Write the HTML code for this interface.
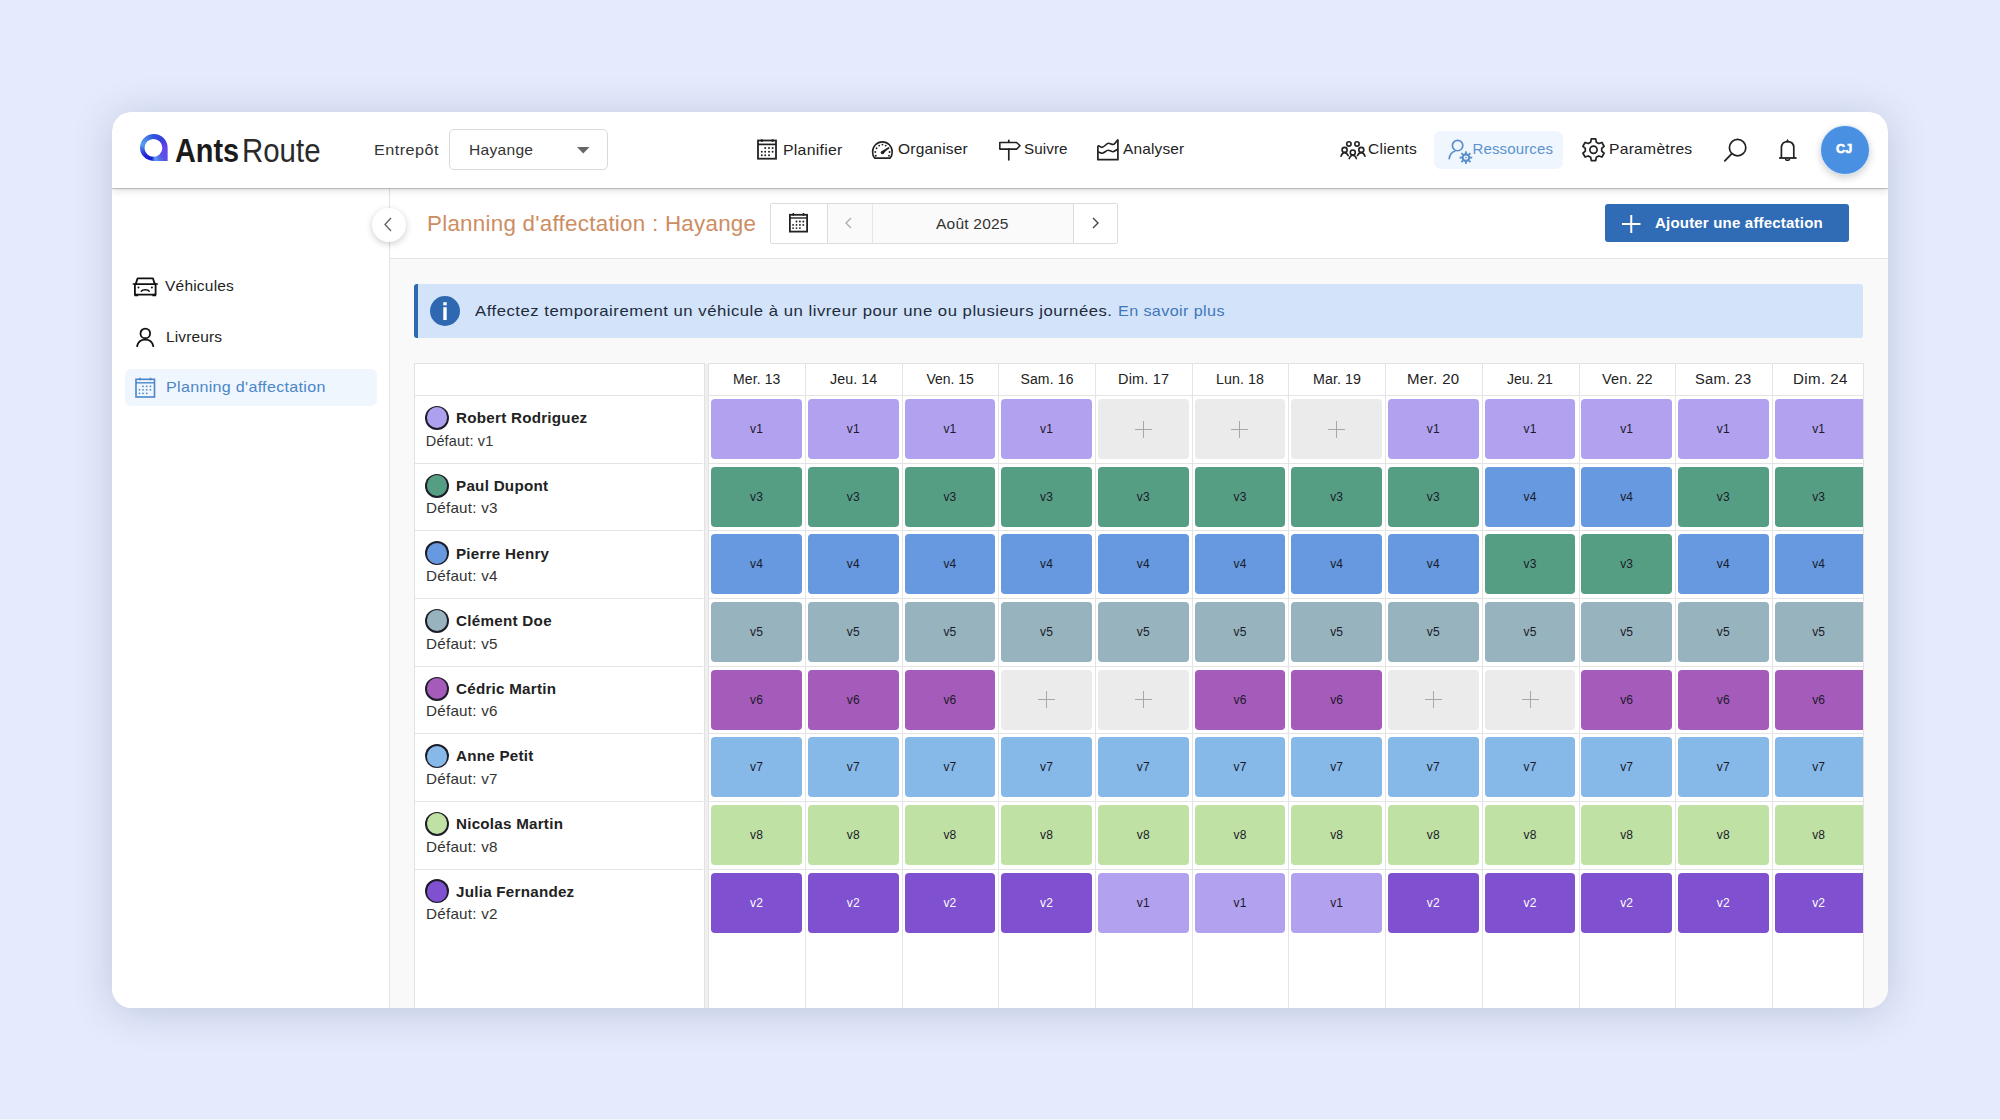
<!DOCTYPE html>
<html lang="fr">
<head>
<meta charset="utf-8">
<title>AntsRoute - Planning d'affectation</title>
<style>
html,body{margin:0;padding:0;}
body{width:2000px;height:1120px;overflow:hidden;background:#e5ebfc;font-family:"Liberation Sans", sans-serif;position:relative;}
.abs{position:absolute;}
.card{position:absolute;left:112px;top:112px;width:1776px;height:896px;border-radius:20px;background:#fff;overflow:hidden;box-shadow:0 4px 40px rgba(40,55,100,0.2);}
.layer{position:absolute;left:-112px;top:-112px;width:2000px;height:1120px;}
.tx{position:absolute;white-space:pre;font-family:"Liberation Sans", sans-serif;}
.header{position:absolute;left:112px;top:112px;width:1776px;height:76px;background:#fff;box-shadow:0 1px 1px rgba(0,0,0,0.19), 0 3px 7px rgba(0,0,0,0.12);z-index:3;}
.sidebar{position:absolute;left:112px;top:188px;width:277px;height:820px;background:#fff;border-right:1px solid #e3e3e3;}
.content{position:absolute;left:390px;top:188px;width:1498px;height:820px;background:#f9f9f9;}
.titlebar{position:absolute;left:390px;top:188px;width:1498px;height:70px;background:#fff;border-bottom:1px solid #e2e2e2;}
.sel{position:absolute;z-index:4;left:448.8px;top:128.8px;width:157px;height:39px;border:1px solid #d9d9d9;border-radius:5px;background:#fff;}
.navsel{position:absolute;z-index:4;left:1433.5px;top:130.5px;width:129px;height:38.5px;border-radius:7px;background:#f0f6fd;}
.avatar{position:absolute;z-index:4;left:1821px;top:125.5px;width:48px;height:48px;border-radius:50%;background:#4a90e2;box-shadow:0 0 0 1px rgba(215,232,252,0.9), 0 3px 8px rgba(0,0,0,0.22);}
.sideSel{position:absolute;left:125px;top:368.5px;width:251.5px;height:37.5px;border-radius:6px;background:#f0f6fd;}
.collapse{position:absolute;left:371.5px;top:207.5px;width:34px;height:34px;border-radius:50%;background:#fff;box-shadow:0 2px 7px rgba(0,0,0,0.2);z-index:4;}
.datepick{position:absolute;left:769.5px;top:202.8px;width:346.5px;height:39px;border:1px solid #dcdcdc;border-radius:2px;background:#fafafa;overflow:hidden;}
.btn{position:absolute;left:1605px;top:204px;width:244px;height:38px;border-radius:3px;background:#2f6cb5;}
.banner{position:absolute;left:414px;top:284px;width:1449px;height:54px;background:#d3e4fa;border-radius:3px;}
.banner:before{content:"";position:absolute;left:0;top:0;width:4px;height:54px;background:#2e68b0;border-radius:3px 0 0 3px;}
.tblL{position:absolute;left:414px;top:363px;width:288.5px;height:700px;border:1px solid #e2e2e2;background:#fff;}
.tblR{position:absolute;left:708px;top:363px;width:1153.5px;height:700px;border:1px solid #e2e2e2;border-right:1px solid #e2e2e2;background:#fff;}
.hl{position:absolute;height:1px;background:#e4e4e4;}
.vl{position:absolute;width:1px;background:#e4e4e4;}
.cell{position:absolute;height:60px;border-radius:4px;font-size:12px;line-height:60px;text-align:center;letter-spacing:0.2px;}
.cell.empty{background:#ebebeb;}
.plus{position:absolute;left:50%;top:50%;width:17px;height:17px;margin:-8.5px 0 0 -8.5px;}
.plus:before{content:"";position:absolute;left:0;top:8px;width:17px;height:1px;background:#a8a8a8;}
.plus:after{content:"";position:absolute;top:0;left:8px;height:17px;width:1px;background:#a8a8a8;}
.dot{position:absolute;left:425px;width:24px;height:24px;border-radius:50%;background:#1c1c28;}
.dot i{position:absolute;left:1.6px;top:1.6px;width:20.8px;height:20.8px;border-radius:50%;}
svg{position:absolute;overflow:visible;}
</style>
</head>
<body>
<div class="card"></div>
<div class="abs" style="left:112px;top:112px;width:1776px;height:896px;border-radius:20px;overflow:hidden;">
 <div class="layer">
  <div class="sidebar"></div>
  <div class="content"></div>
  <div class="titlebar"></div>
  <div class="banner"></div>
  <div class="tblL"></div>
  <div class="tblR"></div>
  <div class="abs" style="left:704.5px;top:364px;width:3.5px;height:700px;background:#efefef;"></div>
<div class="hl" style="left:415px;width:288px;top:395.00px"></div>
<div class="hl" style="left:709px;width:1153.5px;top:395.00px"></div>
<div class="hl" style="left:415px;width:288px;top:462.65px"></div>
<div class="hl" style="left:709px;width:1153.5px;top:462.65px"></div>
<div class="hl" style="left:415px;width:288px;top:530.30px"></div>
<div class="hl" style="left:709px;width:1153.5px;top:530.30px"></div>
<div class="hl" style="left:415px;width:288px;top:597.95px"></div>
<div class="hl" style="left:709px;width:1153.5px;top:597.95px"></div>
<div class="hl" style="left:415px;width:288px;top:665.60px"></div>
<div class="hl" style="left:709px;width:1153.5px;top:665.60px"></div>
<div class="hl" style="left:415px;width:288px;top:733.25px"></div>
<div class="hl" style="left:709px;width:1153.5px;top:733.25px"></div>
<div class="hl" style="left:415px;width:288px;top:800.90px"></div>
<div class="hl" style="left:709px;width:1153.5px;top:800.90px"></div>
<div class="hl" style="left:415px;width:288px;top:868.55px"></div>
<div class="hl" style="left:709px;width:1153.5px;top:868.55px"></div>
<div class="vl" style="left:805.08px;top:363px;height:700px"></div>
<div class="vl" style="left:901.76px;top:363px;height:700px"></div>
<div class="vl" style="left:998.44px;top:363px;height:700px"></div>
<div class="vl" style="left:1095.12px;top:363px;height:700px"></div>
<div class="vl" style="left:1191.80px;top:363px;height:700px"></div>
<div class="vl" style="left:1288.48px;top:363px;height:700px"></div>
<div class="vl" style="left:1385.16px;top:363px;height:700px"></div>
<div class="vl" style="left:1481.84px;top:363px;height:700px"></div>
<div class="vl" style="left:1578.52px;top:363px;height:700px"></div>
<div class="vl" style="left:1675.20px;top:363px;height:700px"></div>
<div class="vl" style="left:1771.88px;top:363px;height:700px"></div>
<div class="cell" style="left:711.30px;top:399.00px;width:90.58px;background:#b2a1ef;color:#1a1a2a;">v1</div>
<div class="cell" style="left:807.98px;top:399.00px;width:90.58px;background:#b2a1ef;color:#1a1a2a;">v1</div>
<div class="cell" style="left:904.66px;top:399.00px;width:90.58px;background:#b2a1ef;color:#1a1a2a;">v1</div>
<div class="cell" style="left:1001.34px;top:399.00px;width:90.58px;background:#b2a1ef;color:#1a1a2a;">v1</div>
<div class="cell empty" style="left:1098.02px;top:399.00px;width:90.58px;"><i class="plus"></i></div>
<div class="cell empty" style="left:1194.70px;top:399.00px;width:90.58px;"><i class="plus"></i></div>
<div class="cell empty" style="left:1291.38px;top:399.00px;width:90.58px;"><i class="plus"></i></div>
<div class="cell" style="left:1388.06px;top:399.00px;width:90.58px;background:#b2a1ef;color:#1a1a2a;">v1</div>
<div class="cell" style="left:1484.74px;top:399.00px;width:90.58px;background:#b2a1ef;color:#1a1a2a;">v1</div>
<div class="cell" style="left:1581.42px;top:399.00px;width:90.58px;background:#b2a1ef;color:#1a1a2a;">v1</div>
<div class="cell" style="left:1678.10px;top:399.00px;width:90.58px;background:#b2a1ef;color:#1a1a2a;">v1</div>
<div class="cell" style="left:1774.78px;top:399.00px;width:87.82px;background:#b2a1ef;color:#1a1a2a;border-radius:4px 0 0 4px;">v1</div>
<div class="cell" style="left:711.30px;top:466.65px;width:90.58px;background:#559e83;color:#1a1a2a;">v3</div>
<div class="cell" style="left:807.98px;top:466.65px;width:90.58px;background:#559e83;color:#1a1a2a;">v3</div>
<div class="cell" style="left:904.66px;top:466.65px;width:90.58px;background:#559e83;color:#1a1a2a;">v3</div>
<div class="cell" style="left:1001.34px;top:466.65px;width:90.58px;background:#559e83;color:#1a1a2a;">v3</div>
<div class="cell" style="left:1098.02px;top:466.65px;width:90.58px;background:#559e83;color:#1a1a2a;">v3</div>
<div class="cell" style="left:1194.70px;top:466.65px;width:90.58px;background:#559e83;color:#1a1a2a;">v3</div>
<div class="cell" style="left:1291.38px;top:466.65px;width:90.58px;background:#559e83;color:#1a1a2a;">v3</div>
<div class="cell" style="left:1388.06px;top:466.65px;width:90.58px;background:#559e83;color:#1a1a2a;">v3</div>
<div class="cell" style="left:1484.74px;top:466.65px;width:90.58px;background:#6699df;color:#1a1a2a;">v4</div>
<div class="cell" style="left:1581.42px;top:466.65px;width:90.58px;background:#6699df;color:#1a1a2a;">v4</div>
<div class="cell" style="left:1678.10px;top:466.65px;width:90.58px;background:#559e83;color:#1a1a2a;">v3</div>
<div class="cell" style="left:1774.78px;top:466.65px;width:87.82px;background:#559e83;color:#1a1a2a;border-radius:4px 0 0 4px;">v3</div>
<div class="cell" style="left:711.30px;top:534.30px;width:90.58px;background:#6699df;color:#1a1a2a;">v4</div>
<div class="cell" style="left:807.98px;top:534.30px;width:90.58px;background:#6699df;color:#1a1a2a;">v4</div>
<div class="cell" style="left:904.66px;top:534.30px;width:90.58px;background:#6699df;color:#1a1a2a;">v4</div>
<div class="cell" style="left:1001.34px;top:534.30px;width:90.58px;background:#6699df;color:#1a1a2a;">v4</div>
<div class="cell" style="left:1098.02px;top:534.30px;width:90.58px;background:#6699df;color:#1a1a2a;">v4</div>
<div class="cell" style="left:1194.70px;top:534.30px;width:90.58px;background:#6699df;color:#1a1a2a;">v4</div>
<div class="cell" style="left:1291.38px;top:534.30px;width:90.58px;background:#6699df;color:#1a1a2a;">v4</div>
<div class="cell" style="left:1388.06px;top:534.30px;width:90.58px;background:#6699df;color:#1a1a2a;">v4</div>
<div class="cell" style="left:1484.74px;top:534.30px;width:90.58px;background:#559e83;color:#1a1a2a;">v3</div>
<div class="cell" style="left:1581.42px;top:534.30px;width:90.58px;background:#559e83;color:#1a1a2a;">v3</div>
<div class="cell" style="left:1678.10px;top:534.30px;width:90.58px;background:#6699df;color:#1a1a2a;">v4</div>
<div class="cell" style="left:1774.78px;top:534.30px;width:87.82px;background:#6699df;color:#1a1a2a;border-radius:4px 0 0 4px;">v4</div>
<div class="cell" style="left:711.30px;top:601.95px;width:90.58px;background:#97b3bd;color:#1a1a2a;">v5</div>
<div class="cell" style="left:807.98px;top:601.95px;width:90.58px;background:#97b3bd;color:#1a1a2a;">v5</div>
<div class="cell" style="left:904.66px;top:601.95px;width:90.58px;background:#97b3bd;color:#1a1a2a;">v5</div>
<div class="cell" style="left:1001.34px;top:601.95px;width:90.58px;background:#97b3bd;color:#1a1a2a;">v5</div>
<div class="cell" style="left:1098.02px;top:601.95px;width:90.58px;background:#97b3bd;color:#1a1a2a;">v5</div>
<div class="cell" style="left:1194.70px;top:601.95px;width:90.58px;background:#97b3bd;color:#1a1a2a;">v5</div>
<div class="cell" style="left:1291.38px;top:601.95px;width:90.58px;background:#97b3bd;color:#1a1a2a;">v5</div>
<div class="cell" style="left:1388.06px;top:601.95px;width:90.58px;background:#97b3bd;color:#1a1a2a;">v5</div>
<div class="cell" style="left:1484.74px;top:601.95px;width:90.58px;background:#97b3bd;color:#1a1a2a;">v5</div>
<div class="cell" style="left:1581.42px;top:601.95px;width:90.58px;background:#97b3bd;color:#1a1a2a;">v5</div>
<div class="cell" style="left:1678.10px;top:601.95px;width:90.58px;background:#97b3bd;color:#1a1a2a;">v5</div>
<div class="cell" style="left:1774.78px;top:601.95px;width:87.82px;background:#97b3bd;color:#1a1a2a;border-radius:4px 0 0 4px;">v5</div>
<div class="cell" style="left:711.30px;top:669.60px;width:90.58px;background:#a55bb9;color:#1a1a2a;">v6</div>
<div class="cell" style="left:807.98px;top:669.60px;width:90.58px;background:#a55bb9;color:#1a1a2a;">v6</div>
<div class="cell" style="left:904.66px;top:669.60px;width:90.58px;background:#a55bb9;color:#1a1a2a;">v6</div>
<div class="cell empty" style="left:1001.34px;top:669.60px;width:90.58px;"><i class="plus"></i></div>
<div class="cell empty" style="left:1098.02px;top:669.60px;width:90.58px;"><i class="plus"></i></div>
<div class="cell" style="left:1194.70px;top:669.60px;width:90.58px;background:#a55bb9;color:#1a1a2a;">v6</div>
<div class="cell" style="left:1291.38px;top:669.60px;width:90.58px;background:#a55bb9;color:#1a1a2a;">v6</div>
<div class="cell empty" style="left:1388.06px;top:669.60px;width:90.58px;"><i class="plus"></i></div>
<div class="cell empty" style="left:1484.74px;top:669.60px;width:90.58px;"><i class="plus"></i></div>
<div class="cell" style="left:1581.42px;top:669.60px;width:90.58px;background:#a55bb9;color:#1a1a2a;">v6</div>
<div class="cell" style="left:1678.10px;top:669.60px;width:90.58px;background:#a55bb9;color:#1a1a2a;">v6</div>
<div class="cell" style="left:1774.78px;top:669.60px;width:87.82px;background:#a55bb9;color:#1a1a2a;border-radius:4px 0 0 4px;">v6</div>
<div class="cell" style="left:711.30px;top:737.25px;width:90.58px;background:#86b8e8;color:#1a1a2a;">v7</div>
<div class="cell" style="left:807.98px;top:737.25px;width:90.58px;background:#86b8e8;color:#1a1a2a;">v7</div>
<div class="cell" style="left:904.66px;top:737.25px;width:90.58px;background:#86b8e8;color:#1a1a2a;">v7</div>
<div class="cell" style="left:1001.34px;top:737.25px;width:90.58px;background:#86b8e8;color:#1a1a2a;">v7</div>
<div class="cell" style="left:1098.02px;top:737.25px;width:90.58px;background:#86b8e8;color:#1a1a2a;">v7</div>
<div class="cell" style="left:1194.70px;top:737.25px;width:90.58px;background:#86b8e8;color:#1a1a2a;">v7</div>
<div class="cell" style="left:1291.38px;top:737.25px;width:90.58px;background:#86b8e8;color:#1a1a2a;">v7</div>
<div class="cell" style="left:1388.06px;top:737.25px;width:90.58px;background:#86b8e8;color:#1a1a2a;">v7</div>
<div class="cell" style="left:1484.74px;top:737.25px;width:90.58px;background:#86b8e8;color:#1a1a2a;">v7</div>
<div class="cell" style="left:1581.42px;top:737.25px;width:90.58px;background:#86b8e8;color:#1a1a2a;">v7</div>
<div class="cell" style="left:1678.10px;top:737.25px;width:90.58px;background:#86b8e8;color:#1a1a2a;">v7</div>
<div class="cell" style="left:1774.78px;top:737.25px;width:87.82px;background:#86b8e8;color:#1a1a2a;border-radius:4px 0 0 4px;">v7</div>
<div class="cell" style="left:711.30px;top:804.90px;width:90.58px;background:#bfe1a3;color:#1a1a2a;">v8</div>
<div class="cell" style="left:807.98px;top:804.90px;width:90.58px;background:#bfe1a3;color:#1a1a2a;">v8</div>
<div class="cell" style="left:904.66px;top:804.90px;width:90.58px;background:#bfe1a3;color:#1a1a2a;">v8</div>
<div class="cell" style="left:1001.34px;top:804.90px;width:90.58px;background:#bfe1a3;color:#1a1a2a;">v8</div>
<div class="cell" style="left:1098.02px;top:804.90px;width:90.58px;background:#bfe1a3;color:#1a1a2a;">v8</div>
<div class="cell" style="left:1194.70px;top:804.90px;width:90.58px;background:#bfe1a3;color:#1a1a2a;">v8</div>
<div class="cell" style="left:1291.38px;top:804.90px;width:90.58px;background:#bfe1a3;color:#1a1a2a;">v8</div>
<div class="cell" style="left:1388.06px;top:804.90px;width:90.58px;background:#bfe1a3;color:#1a1a2a;">v8</div>
<div class="cell" style="left:1484.74px;top:804.90px;width:90.58px;background:#bfe1a3;color:#1a1a2a;">v8</div>
<div class="cell" style="left:1581.42px;top:804.90px;width:90.58px;background:#bfe1a3;color:#1a1a2a;">v8</div>
<div class="cell" style="left:1678.10px;top:804.90px;width:90.58px;background:#bfe1a3;color:#1a1a2a;">v8</div>
<div class="cell" style="left:1774.78px;top:804.90px;width:87.82px;background:#bfe1a3;color:#1a1a2a;border-radius:4px 0 0 4px;">v8</div>
<div class="cell" style="left:711.30px;top:872.55px;width:90.58px;background:#7f50d0;color:#fff;">v2</div>
<div class="cell" style="left:807.98px;top:872.55px;width:90.58px;background:#7f50d0;color:#fff;">v2</div>
<div class="cell" style="left:904.66px;top:872.55px;width:90.58px;background:#7f50d0;color:#fff;">v2</div>
<div class="cell" style="left:1001.34px;top:872.55px;width:90.58px;background:#7f50d0;color:#fff;">v2</div>
<div class="cell" style="left:1098.02px;top:872.55px;width:90.58px;background:#b2a1ef;color:#1a1a2a;">v1</div>
<div class="cell" style="left:1194.70px;top:872.55px;width:90.58px;background:#b2a1ef;color:#1a1a2a;">v1</div>
<div class="cell" style="left:1291.38px;top:872.55px;width:90.58px;background:#b2a1ef;color:#1a1a2a;">v1</div>
<div class="cell" style="left:1388.06px;top:872.55px;width:90.58px;background:#7f50d0;color:#fff;">v2</div>
<div class="cell" style="left:1484.74px;top:872.55px;width:90.58px;background:#7f50d0;color:#fff;">v2</div>
<div class="cell" style="left:1581.42px;top:872.55px;width:90.58px;background:#7f50d0;color:#fff;">v2</div>
<div class="cell" style="left:1678.10px;top:872.55px;width:90.58px;background:#7f50d0;color:#fff;">v2</div>
<div class="cell" style="left:1774.78px;top:872.55px;width:87.82px;background:#7f50d0;color:#fff;border-radius:4px 0 0 4px;">v2</div>
<div class="dot" style="top:405.90px"><i style="background:#ada0ee"></i></div>
<div class="dot" style="top:473.55px"><i style="background:#559e83"></i></div>
<div class="dot" style="top:541.20px"><i style="background:#6699df"></i></div>
<div class="dot" style="top:608.85px"><i style="background:#97b3bd"></i></div>
<div class="dot" style="top:676.50px"><i style="background:#a55bb9"></i></div>
<div class="dot" style="top:744.15px"><i style="background:#86b8e8"></i></div>
<div class="dot" style="top:811.80px"><i style="background:#bfe1a3"></i></div>
<div class="dot" style="top:879.45px"><i style="background:#7f50d0"></i></div>
  <div class="sideSel"></div>
  <div class="datepick">
    <div class="abs" style="left:0;top:0;width:56px;height:39px;background:#fff;border-right:1px solid #dcdcdc;"></div>
    <div class="abs" style="left:101px;top:0;width:1px;height:39px;background:#e6e6e6;"></div>
    <div class="abs" style="left:302px;top:0;width:44.5px;height:39px;background:#fff;border-left:1px solid #dcdcdc;"></div>
  </div>
  <div class="btn"></div>
  <div class="header"></div>
  <div class="collapse"></div>
  <div class="sel"></div>
  <div class="navsel"></div>
  <div class="avatar"></div>
 </div>
</div>

<!-- icons -->
<div style="position:absolute;left:0;top:0;width:2000px;height:1120px;z-index:10;">
<!-- logo -->
<div style="position:absolute;left:139.75px;top:134.2px;width:28px;height:27px;background:conic-gradient(from 0deg at 13.7px 13.7px,#3050e0 0deg,#3a3fd8 45deg,#6644ea 90deg,#5a50e6 135deg,#4f7fee 160deg,#60a0f4 172deg,#1a1fd6 190deg,#1e22d0 225deg,#3a56e0 255deg,#55a0ee 285deg,#4a80e6 320deg,#3050e0 360deg);clip-path:path(evenodd,'M0.25 13.7 A13.45 13.45 0 0 1 27.9 13.7 V26.7 H13.7 A13.45 13.45 0 0 1 0.25 13.7 Z M4.8 13.7 A8.9 8.9 0 1 0 22.6 13.7 A8.9 8.9 0 1 0 4.8 13.7 Z');"></div>

<!-- select arrow -->
<svg style="left:577px;top:147px" width="12.5" height="6.5" viewBox="0 0 12.5 6.5"><path d="M0 0 H12.5 L6.25 6.5 Z" fill="#666"/></svg>

<!-- Planifier calendar -->
<svg style="left:757px;top:138.5px" width="20" height="21" viewBox="0 0 20 21">
  <rect x="1" y="1.5" width="18" height="18.2" fill="none" stroke="#222" stroke-width="1.8"/>
  <line x1="1" y1="5.4" x2="19" y2="5.4" stroke="#222" stroke-width="1.7"/>
  <circle cx="4.8" cy="1.6" r="1.4" fill="#222"/><circle cx="15.6" cy="1.6" r="1.4" fill="#222"/>
  <g fill="#222"><circle cx="8.2" cy="9" r="1"/><circle cx="12" cy="9" r="1"/><circle cx="15.6" cy="9" r="1"/>
  <circle cx="4.8" cy="12.8" r="1"/><circle cx="8.2" cy="12.8" r="1"/><circle cx="12" cy="12.8" r="1"/><circle cx="15.6" cy="12.8" r="1"/>
  <circle cx="4.8" cy="16.3" r="1"/><circle cx="8.2" cy="16.3" r="1"/><circle cx="12" cy="16.3" r="1"/></g>
</svg>

<!-- Organiser gauge -->
<svg style="left:872px;top:140.5px" width="21" height="18" viewBox="0 0 21 18">
  <path d="M2.6 17.1 C1.3 15.3 0.6 13.2 0.6 10.9 C0.6 5.2 5 0.9 10.4 0.9 C15.8 0.9 20.2 5.2 20.2 10.9 C20.2 13.2 19.5 15.3 18.2 17.1 Z" fill="none" stroke="#222" stroke-width="1.6" stroke-linejoin="round"/>
  <path d="M10.4 10.8 L16.6 7" stroke="#222" stroke-width="1.7" stroke-linecap="round"/>
  <path d="M8.8 11.6 L16.6 7 L11.2 12.9 Z" fill="#222"/>
  <circle cx="10.4" cy="11.6" r="1.7" fill="#222"/>
  <g fill="#222"><circle cx="3.3" cy="11" r="0.95"/><circle cx="4.6" cy="7.3" r="0.95"/><circle cx="7.2" cy="4.6" r="0.95"/><circle cx="10.4" cy="3.6" r="0.95"/><circle cx="13.7" cy="4.6" r="0.95"/><circle cx="17.6" cy="11" r="0.95"/><circle cx="3.8" cy="14.7" r="0.95"/><circle cx="17" cy="14.7" r="0.95"/></g>
</svg>

<!-- Suivre signpost -->
<svg style="left:999px;top:139.5px" width="22" height="21" viewBox="0 0 22 21">
  <path d="M0.8 2.5 H17.6 L21 5.8 L17.6 9.1 H0.8 Z" fill="none" stroke="#222" stroke-width="1.6" stroke-linejoin="round"/>
  <line x1="9.8" y1="-0.3" x2="9.8" y2="2.5" stroke="#222" stroke-width="1.7"/>
  <line x1="9.8" y1="9.1" x2="9.8" y2="19.8" stroke="#222" stroke-width="1.7" stroke-linecap="round"/>
</svg>

<!-- Analyser chart -->
<svg style="left:1097px;top:139.5px" width="22" height="21" viewBox="0 0 22 21">
  <path d="M0.9 5.8 V19.7 H20.9 V-0.4" fill="none" stroke="#222" stroke-width="1.7" stroke-linejoin="round"/>
  <path d="M0.9 5.8 C2.5 5.2 3.5 7.4 4.9 7.4 C7 7.4 9.5 3.3 11.4 3.3 C13.3 3.3 14.8 4.6 16.2 4.5 C17.8 4.4 19.5 1.2 20.9 -0.4" fill="none" stroke="#222" stroke-width="1.6"/>
  <path d="M0.9 12.2 C2.5 11.8 3.6 13.3 5 13.3 C7 13.3 9.2 10.3 11 10.3 C13 10.3 14.6 11.8 16 11.7 C17.8 11.5 19.4 9.8 20.9 9" fill="none" stroke="#222" stroke-width="1.6"/>
</svg>

<!-- Clients -->
<svg style="left:1340px;top:140.5px" width="26" height="18.5" viewBox="0 0 26 18.5">
  <g fill="none" stroke="#222" stroke-width="1.6" stroke-linecap="round">
   <circle cx="8.9" cy="2.9" r="2.2"/><circle cx="17" cy="2.9" r="2.2"/>
   <circle cx="4.6" cy="8.9" r="2.5"/><circle cx="12.8" cy="11.5" r="2.5"/><circle cx="21.3" cy="8.9" r="2.5"/>
   <path d="M1 15.2 C1.8 13 3 11.6 4.6 11.6 C6.2 11.6 7.4 13 8.2 14.6"/>
   <path d="M9.2 17.6 C10 15.4 11.2 14.2 12.8 14.2 C14.4 14.2 15.6 15.4 16.4 17.6"/>
   <path d="M17.4 14.6 C18.2 13 19.6 11.6 21.3 11.6 C23 11.6 24.2 13 25 15.2"/>
  </g>
</svg>

<!-- Ressources -->
<svg style="left:1447.5px;top:140px" width="25" height="24" viewBox="0 0 25 24">
  <g fill="none" stroke="#5b8fcc" stroke-width="1.7" stroke-linecap="round">
   <circle cx="9.6" cy="5.55" r="5.2"/>
   <path d="M6.8 11.2 C3.6 12 1.8 14.8 1.2 18.6"/>
  </g>
  <g transform="translate(17.9,17.6)">
   <circle r="4.3" fill="#5b8fcc"/>
   <g stroke="#5b8fcc" stroke-width="1.9"><line x1="0" y1="-6.3" x2="0" y2="6.3"/><line x1="-6.3" y1="0" x2="6.3" y2="0"/><line x1="-4.5" y1="-4.5" x2="4.5" y2="4.5"/><line x1="-4.5" y1="4.5" x2="4.5" y2="-4.5"/></g>
   <circle r="2.2" fill="#f0f6fd"/>
   <circle r="0.8" fill="#5b8fcc"/>
  </g>
</svg>

<!-- Parametres gear -->
<svg style="left:1582px;top:137.5px" width="23" height="23.5" viewBox="-11.5 -11.75 23 23.5">
  <path d="M-2.2 -10.8 L2.2 -10.8 L2.8 -7.6 L5.3 -6.2 L8.4 -7.3 L10.6 -3.5 L8.2 -1.4 L8.2 1.4 L10.6 3.5 L8.4 7.3 L5.3 6.2 L2.8 7.6 L2.2 10.8 L-2.2 10.8 L-2.8 7.6 L-5.3 6.2 L-8.4 7.3 L-10.6 3.5 L-8.2 1.4 L-8.2 -1.4 L-10.6 -3.5 L-8.4 -7.3 L-5.3 -6.2 L-2.8 -7.6 Z" fill="none" stroke="#222" stroke-width="1.7" stroke-linejoin="round"/>
  <circle r="3.6" fill="none" stroke="#222" stroke-width="1.7"/>
</svg>

<!-- search -->
<svg style="left:1723.5px;top:139px" width="23" height="23" viewBox="0 0 23 23">
  <circle cx="13.6" cy="8.65" r="8.2" fill="none" stroke="#222" stroke-width="1.7"/>
  <line x1="7.6" y1="14.9" x2="0.8" y2="21.9" stroke="#222" stroke-width="1.8" stroke-linecap="round"/>
</svg>

<!-- bell -->
<svg style="left:1779px;top:139px" width="18.5" height="23" viewBox="0 0 18.5 23">
  <path d="M2.4 19 V8.6 C2.4 4.6 5 2.6 8.5 2.6 C12 2.6 14.8 4.6 14.8 8.6 V19" fill="none" stroke="#222" stroke-width="1.7"/>
  <path d="M0.1 19 H17.6" stroke="#222" stroke-width="1.8"/>
  <path d="M6.6 19.4 A1.95 1.95 0 0 0 10.5 19.4" fill="none" stroke="#222" stroke-width="1.5"/>
  <path d="M7.4 2.8 L8.5 0.6 L9.6 2.8 Z" fill="#222" stroke="#222" stroke-width="1" stroke-linejoin="round"/>
</svg>

<!-- sidebar vehicle -->
<svg style="left:132.5px;top:276.5px" width="25" height="19" viewBox="0 0 25 19">
  <path d="M2.7 7.1 L4.6 1.3 H19.9 L21.8 7.1" fill="none" stroke="#111" stroke-width="1.8" stroke-linejoin="round"/>
  <path d="M1.9 7.1 H22.6 V17.6 H1.9 Z" fill="none" stroke="#111" stroke-width="1.8" stroke-linejoin="round"/>
  <path d="M0.3 7.1 H2.5 M22 7.1 H24.3" stroke="#111" stroke-width="1.5" stroke-linecap="round"/>
  <path d="M2.2 16.5 V18.4 H5.2 M22.3 16.5 V18.4 H19.3" fill="none" stroke="#111" stroke-width="1.6"/>
  <circle cx="5.5" cy="10.6" r="1" fill="#111"/><circle cx="18.9" cy="10.6" r="1" fill="#111"/>
  <path d="M8.4 14.2 C9 13 10.5 12.8 12.2 12.8 C13.9 12.8 15.5 13 16.1 14.2" fill="none" stroke="#111" stroke-width="1.6" stroke-linecap="round"/>
</svg>

<!-- sidebar livreurs -->
<svg style="left:135.5px;top:326.5px" width="19" height="20" viewBox="0 0 19 20">
  <circle cx="9.3" cy="6.4" r="4.8" fill="none" stroke="#111" stroke-width="1.8"/>
  <path d="M1.1 19.2 C2 14.8 5 12.6 9.3 12.6 C13.6 12.6 16.4 14.8 17.3 19.2" fill="none" stroke="#111" stroke-width="1.8" stroke-linecap="round"/>
</svg>

<!-- sidebar planning calendar -->
<svg style="left:134.5px;top:376.5px" width="20.5" height="21" viewBox="0 0 20.5 21">
  <rect x="1" y="2.3" width="18.5" height="17.7" fill="none" stroke="#4a86c8" stroke-width="1.6"/>
  <line x1="1" y1="5.8" x2="19.5" y2="5.8" stroke="#4a86c8" stroke-width="1.4"/>
  <line x1="5" y1="0.8" x2="5" y2="3.3" stroke="#4a86c8" stroke-width="1.6"/>
  <line x1="15.5" y1="0.8" x2="15.5" y2="3.3" stroke="#4a86c8" stroke-width="1.6"/>
  <g fill="#4a86c8"><circle cx="8" cy="9.3" r="0.9"/><circle cx="11.7" cy="9.3" r="0.9"/><circle cx="15.4" cy="9.3" r="0.9"/>
  <circle cx="4.5" cy="12.8" r="0.9"/><circle cx="8" cy="12.8" r="0.9"/><circle cx="11.7" cy="12.8" r="0.9"/><circle cx="15.4" cy="12.8" r="0.9"/>
  <circle cx="4.5" cy="16.3" r="0.9"/><circle cx="8" cy="16.3" r="0.9"/><circle cx="11.7" cy="16.3" r="0.9"/></g>
</svg>

<!-- collapse chevron -->
<svg style="left:383.5px;top:217px" width="8" height="15" viewBox="0 0 8 15"><path d="M7 1 L1 7.5 L7 14" fill="none" stroke="#666" stroke-width="1.4"/></svg>

<!-- datepicker calendar -->
<svg style="left:789px;top:212.5px" width="19" height="19.5" viewBox="0 0 19 19.5">
  <rect x="0.9" y="1.8" width="17.2" height="16.8" fill="none" stroke="#222" stroke-width="1.8"/>
  <line x1="0.9" y1="5" x2="18.1" y2="5" stroke="#222" stroke-width="1.4"/>
  <line x1="4.3" y1="0" x2="4.3" y2="2.8" stroke="#222" stroke-width="1.6"/>
  <line x1="14.5" y1="0" x2="14.5" y2="2.8" stroke="#222" stroke-width="1.6"/>
  <g fill="#222"><circle cx="7.5" cy="8.5" r="0.95"/><circle cx="10.9" cy="8.5" r="0.95"/><circle cx="14.3" cy="8.5" r="0.95"/>
  <circle cx="4.1" cy="11.9" r="0.95"/><circle cx="7.5" cy="11.9" r="0.95"/><circle cx="10.9" cy="11.9" r="0.95"/><circle cx="14.3" cy="11.9" r="0.95"/>
  <circle cx="4.1" cy="15.1" r="0.95"/><circle cx="7.5" cy="15.1" r="0.95"/><circle cx="10.9" cy="15.1" r="0.95"/></g>
</svg>
<!-- datepicker prev/next -->
<svg style="left:845px;top:217px" width="7" height="12" viewBox="0 0 7 12"><path d="M6 1 L1 6 L6 11" fill="none" stroke="#aaa" stroke-width="1.3"/></svg>
<svg style="left:1092px;top:217px" width="7" height="12" viewBox="0 0 7 12"><path d="M1 1 L6 6 L1 11" fill="none" stroke="#444" stroke-width="1.4"/></svg>

<!-- button plus -->
<svg style="left:1621.5px;top:215px" width="18.5" height="18" viewBox="0 0 18.5 18"><path d="M9.25 0 V18 M0 9 H18.5" stroke="#fff" stroke-width="2"/></svg>

<!-- info icon -->
<svg style="left:430px;top:296px" width="30" height="30" viewBox="0 0 30 30">
  <circle cx="15" cy="15" r="15" fill="#2e68b0"/>
  <rect x="13.3" y="6.2" width="3.4" height="3.2" fill="#fff"/>
  <rect x="13.3" y="11.2" width="3.4" height="12.8" fill="#fff"/>
</svg>
<div class="tx" style="top:133.87px;font-size:33px;line-height:33px;font-weight:700;color:#1b1b1b;letter-spacing:0.000px;transform:scaleX(0.8753);transform-origin:0 0;left:175.20px;">Ants</div>
<div class="tx" style="top:133.87px;font-size:33px;line-height:33px;font-weight:400;color:#2a2a2a;letter-spacing:0.000px;transform:scaleX(0.8914);transform-origin:0 0;left:241.60px;">Route</div>
<div class="tx" style="top:141.80px;font-size:15px;line-height:15px;font-weight:400;color:#333;letter-spacing:0.406px;transform:scaleX(1.0813);transform-origin:0 0;left:374.30px;">Entrepôt</div>
<div class="tx" style="top:141.80px;font-size:15px;line-height:15px;font-weight:400;color:#333;letter-spacing:0.254px;transform:scaleX(1.0395);transform-origin:0 0;left:469.00px;">Hayange</div>
<div class="tx" style="top:141.55px;font-size:15px;line-height:15px;font-weight:400;color:#222;letter-spacing:0.239px;transform:scaleX(1.0559);transform-origin:0 0;left:782.75px;">Planifier</div>
<div class="tx" style="top:141.30px;font-size:15px;line-height:15px;font-weight:400;color:#222;letter-spacing:0.190px;transform:scaleX(1.0359);transform-origin:0 0;left:898.20px;">Organiser</div>
<div class="tx" style="top:141.30px;font-size:15px;line-height:15px;font-weight:400;color:#222;letter-spacing:0.084px;transform:scaleX(1.0151);transform-origin:0 0;left:1024.00px;">Suivre</div>
<div class="tx" style="top:141.30px;font-size:15px;line-height:15px;font-weight:400;color:#222;letter-spacing:0.158px;transform:scaleX(1.0292);transform-origin:0 0;left:1122.80px;">Analyser</div>
<div class="tx" style="top:141.30px;font-size:15px;line-height:15px;font-weight:400;color:#222;letter-spacing:0.195px;transform:scaleX(1.0398);transform-origin:0 0;left:1368.00px;">Clients</div>
<div class="tx" style="top:141.30px;font-size:15px;line-height:15px;font-weight:400;color:#5b92d0;letter-spacing:0.144px;left:1472.50px;">Ressources</div>
<div class="tx" style="top:141.10px;font-size:15px;line-height:15px;font-weight:400;color:#222;letter-spacing:0.241px;transform:scaleX(1.0439);transform-origin:0 0;left:1608.80px;">Paramètres</div>
<div class="tx" style="top:143.22px;font-size:12.5px;line-height:12.5px;font-weight:700;color:#fff;letter-spacing:0.216px;-webkit-text-stroke:0.6px #fff;left:1836.00px;">CJ</div>
<div class="tx" style="top:278.00px;font-size:15px;line-height:15px;font-weight:400;color:#222;letter-spacing:0.186px;transform:scaleX(1.0355);transform-origin:0 0;left:165.40px;">Véhicules</div>
<div class="tx" style="top:329.00px;font-size:15px;line-height:15px;font-weight:400;color:#222;letter-spacing:0.152px;transform:scaleX(1.0308);transform-origin:0 0;left:166.00px;">Livreurs</div>
<div class="tx" style="top:379.30px;font-size:15px;line-height:15px;font-weight:400;color:#4a86c8;letter-spacing:0.296px;transform:scaleX(1.0698);transform-origin:0 0;left:166.00px;">Planning d&#39;affectation</div>
<div class="tx" style="top:213.80px;font-size:21.5px;line-height:21.5px;font-weight:400;color:#cd8d63;letter-spacing:0.254px;transform:scaleX(1.0398);transform-origin:0 0;left:427.40px;">Planning d&#39;affectation : Hayange</div>
<div class="tx" style="top:215.80px;font-size:15px;line-height:15px;font-weight:400;color:#333;letter-spacing:0.198px;transform:scaleX(1.0359);transform-origin:0 0;left:935.50px;">Août 2025</div>
<div class="tx" style="top:215.73px;font-size:14.5px;line-height:14.5px;font-weight:700;color:#fff;letter-spacing:0.172px;transform:scaleX(1.0372);transform-origin:0 0;left:1655.30px;">Ajouter une affectation</div>
<div class="tx" style="top:303.10px;font-size:15px;line-height:15px;font-weight:400;color:#1d2b3a;letter-spacing:0.460px;transform:scaleX(1.1132);transform-origin:0 0;left:475.00px;">Affectez temporairement un véhicule à un livreur pour une ou plusieurs journées.</div>
<div class="tx" style="top:303.10px;font-size:15px;line-height:15px;font-weight:400;color:#3f77b8;letter-spacing:0.350px;transform:scaleX(1.0782);transform-origin:0 0;left:1118.00px;">En savoir plus</div>
<div class="tx" style="top:372.45px;font-size:14px;line-height:14px;font-weight:400;color:#222;letter-spacing:0.116px;left:733.00px;">Mer. 13</div>
<div class="tx" style="top:372.45px;font-size:14px;line-height:14px;font-weight:400;color:#222;letter-spacing:0.076px;transform:scaleX(1.0152);transform-origin:0 0;left:829.90px;">Jeu. 14</div>
<div class="tx" style="top:372.45px;font-size:14px;line-height:14px;font-weight:400;color:#222;letter-spacing:-0.017px;left:926.50px;">Ven. 15</div>
<div class="tx" style="top:372.45px;font-size:14px;line-height:14px;font-weight:400;color:#222;letter-spacing:0.160px;left:1020.40px;">Sam. 16</div>
<div class="tx" style="top:372.45px;font-size:14px;line-height:14px;font-weight:400;color:#222;letter-spacing:0.184px;transform:scaleX(1.0356);transform-origin:0 0;left:1117.90px;">Dim. 17</div>
<div class="tx" style="top:372.45px;font-size:14px;line-height:14px;font-weight:400;color:#222;letter-spacing:0.084px;transform:scaleX(1.0165);transform-origin:0 0;left:1216.00px;">Lun. 18</div>
<div class="tx" style="top:372.45px;font-size:14px;line-height:14px;font-weight:400;color:#222;letter-spacing:0.085px;transform:scaleX(1.0167);transform-origin:0 0;left:1312.90px;">Mar. 19</div>
<div class="tx" style="top:372.45px;font-size:14px;line-height:14px;font-weight:400;color:#222;letter-spacing:0.342px;transform:scaleX(1.0706);transform-origin:0 0;left:1407.40px;">Mer. 20</div>
<div class="tx" style="top:372.45px;font-size:14px;line-height:14px;font-weight:400;color:#222;letter-spacing:-0.006px;left:1507.00px;">Jeu. 21</div>
<div class="tx" style="top:372.45px;font-size:14px;line-height:14px;font-weight:400;color:#222;letter-spacing:0.193px;transform:scaleX(1.0379);transform-origin:0 0;left:1601.50px;">Ven. 22</div>
<div class="tx" style="top:372.45px;font-size:14px;line-height:14px;font-weight:400;color:#222;letter-spacing:0.252px;transform:scaleX(1.0456);transform-origin:0 0;left:1695.40px;">Sam. 23</div>
<div class="tx" style="top:372.45px;font-size:14px;line-height:14px;font-weight:400;color:#222;letter-spacing:0.388px;transform:scaleX(1.0779);transform-origin:0 0;left:1793.00px;">Dim. 24</div>
<div class="tx" style="top:411.23px;font-size:14.5px;line-height:14.5px;font-weight:700;color:#222;letter-spacing:0.243px;transform:scaleX(1.0472);transform-origin:0 0;left:455.80px;">Robert Rodriguez</div>
<div class="tx" style="top:433.73px;font-size:14.5px;line-height:14.5px;font-weight:400;color:#333;letter-spacing:0.145px;left:425.80px;">Défaut: v1</div>
<div class="tx" style="top:478.88px;font-size:14.5px;line-height:14.5px;font-weight:700;color:#222;letter-spacing:0.256px;transform:scaleX(1.0472);transform-origin:0 0;left:455.80px;">Paul Dupont</div>
<div class="tx" style="top:501.38px;font-size:14.5px;line-height:14.5px;font-weight:400;color:#333;letter-spacing:0.229px;transform:scaleX(1.0491);transform-origin:0 0;left:425.80px;">Défaut: v3</div>
<div class="tx" style="top:546.53px;font-size:14.5px;line-height:14.5px;font-weight:700;color:#222;letter-spacing:0.235px;transform:scaleX(1.0472);transform-origin:0 0;left:455.80px;">Pierre Henry</div>
<div class="tx" style="top:569.03px;font-size:14.5px;line-height:14.5px;font-weight:400;color:#333;letter-spacing:0.229px;transform:scaleX(1.0491);transform-origin:0 0;left:425.80px;">Défaut: v4</div>
<div class="tx" style="top:614.18px;font-size:14.5px;line-height:14.5px;font-weight:700;color:#222;letter-spacing:0.266px;transform:scaleX(1.0472);transform-origin:0 0;left:455.80px;">Clément Doe</div>
<div class="tx" style="top:636.68px;font-size:14.5px;line-height:14.5px;font-weight:400;color:#333;letter-spacing:0.229px;transform:scaleX(1.0491);transform-origin:0 0;left:425.80px;">Défaut: v5</div>
<div class="tx" style="top:681.83px;font-size:14.5px;line-height:14.5px;font-weight:700;color:#222;letter-spacing:0.232px;transform:scaleX(1.0472);transform-origin:0 0;left:455.80px;">Cédric Martin</div>
<div class="tx" style="top:704.33px;font-size:14.5px;line-height:14.5px;font-weight:400;color:#333;letter-spacing:0.229px;transform:scaleX(1.0491);transform-origin:0 0;left:425.80px;">Défaut: v6</div>
<div class="tx" style="top:749.48px;font-size:14.5px;line-height:14.5px;font-weight:700;color:#222;letter-spacing:0.239px;transform:scaleX(1.0472);transform-origin:0 0;left:455.80px;">Anne Petit</div>
<div class="tx" style="top:771.98px;font-size:14.5px;line-height:14.5px;font-weight:400;color:#333;letter-spacing:0.229px;transform:scaleX(1.0491);transform-origin:0 0;left:425.80px;">Défaut: v7</div>
<div class="tx" style="top:817.13px;font-size:14.5px;line-height:14.5px;font-weight:700;color:#222;letter-spacing:0.229px;transform:scaleX(1.0472);transform-origin:0 0;left:455.80px;">Nicolas Martin</div>
<div class="tx" style="top:839.63px;font-size:14.5px;line-height:14.5px;font-weight:400;color:#333;letter-spacing:0.229px;transform:scaleX(1.0491);transform-origin:0 0;left:425.80px;">Défaut: v8</div>
<div class="tx" style="top:884.78px;font-size:14.5px;line-height:14.5px;font-weight:700;color:#222;letter-spacing:0.235px;transform:scaleX(1.0472);transform-origin:0 0;left:455.80px;">Julia Fernandez</div>
<div class="tx" style="top:907.28px;font-size:14.5px;line-height:14.5px;font-weight:400;color:#333;letter-spacing:0.229px;transform:scaleX(1.0491);transform-origin:0 0;left:425.80px;">Défaut: v2</div>
</div>
<div style="position:absolute;left:0;top:1119px;width:2000px;height:1px;background:#eef6fc;z-index:20;"></div>
</body>
</html>
